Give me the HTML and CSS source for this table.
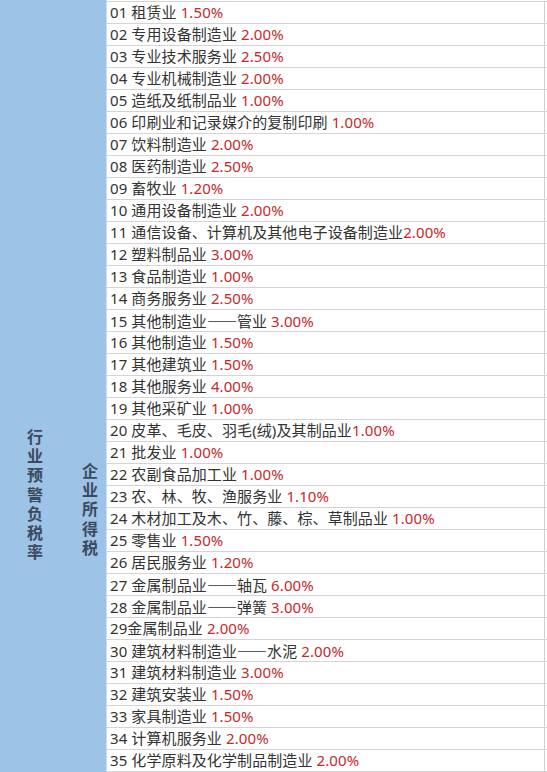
FILE: index.html
```html
<!DOCTYPE html>
<html lang="zh-CN">
<head>
<meta charset="utf-8">
<title>行业预警负税率</title>
<link rel="stylesheet" href="styles.css">
</head>
<body>
<div class="sheet">
  <div class="side">
    <div class="col col-a"><div class="vtext va">行业预警负税率</div></div>
    <div class="col col-b"><div class="vtext vb">企业所得税</div></div>
  </div>
  <div class="rows">
    <div class="row"><div class="cell">01 租赁业 <span class="pct">1.50%</span></div></div>
    <div class="row"><div class="cell">02 专用设备制造业 <span class="pct">2.00%</span></div></div>
    <div class="row"><div class="cell">03 专业技术服务业 <span class="pct">2.50%</span></div></div>
    <div class="row"><div class="cell">04 专业机械制造业 <span class="pct">2.00%</span></div></div>
    <div class="row"><div class="cell">05 造纸及纸制品业 <span class="pct">1.00%</span></div></div>
    <div class="row"><div class="cell">06 印刷业和记录媒介的复制印刷 <span class="pct">1.00%</span></div></div>
    <div class="row"><div class="cell">07 饮料制造业 <span class="pct">2.00%</span></div></div>
    <div class="row"><div class="cell">08 医药制造业 <span class="pct">2.50%</span></div></div>
    <div class="row"><div class="cell">09 畜牧业 <span class="pct">1.20%</span></div></div>
    <div class="row"><div class="cell">10 通用设备制造业 <span class="pct">2.00%</span></div></div>
    <div class="row"><div class="cell">11 通信设备、计算机及其他电子设备制造业<span class="pct">2.00%</span></div></div>
    <div class="row"><div class="cell">12 塑料制品业 <span class="pct">3.00%</span></div></div>
    <div class="row"><div class="cell">13 食品制造业 <span class="pct">1.00%</span></div></div>
    <div class="row"><div class="cell">14 商务服务业 <span class="pct">2.50%</span></div></div>
    <div class="row"><div class="cell">15 其他制造业<span class="dash">——</span>管业 <span class="pct">3.00%</span></div></div>
    <div class="row"><div class="cell">16 其他制造业 <span class="pct">1.50%</span></div></div>
    <div class="row"><div class="cell">17 其他建筑业 <span class="pct">1.50%</span></div></div>
    <div class="row"><div class="cell">18 其他服务业 <span class="pct">4.00%</span></div></div>
    <div class="row"><div class="cell">19 其他采矿业 <span class="pct">1.00%</span></div></div>
    <div class="row"><div class="cell">20 皮革、毛皮、羽毛(绒)及其制品业<span class="pct">1.00%</span></div></div>
    <div class="row"><div class="cell">21 批发业 <span class="pct">1.00%</span></div></div>
    <div class="row"><div class="cell">22 农副食品加工业 <span class="pct">1.00%</span></div></div>
    <div class="row"><div class="cell">23 农、林、牧、渔服务业 <span class="pct">1.10%</span></div></div>
    <div class="row"><div class="cell">24 木材加工及木、竹、藤、棕、草制品业 <span class="pct">1.00%</span></div></div>
    <div class="row"><div class="cell">25 零售业 <span class="pct">1.50%</span></div></div>
    <div class="row"><div class="cell">26 居民服务业 <span class="pct">1.20%</span></div></div>
    <div class="row"><div class="cell">27 金属制品业<span class="dash">——</span>轴瓦 <span class="pct">6.00%</span></div></div>
    <div class="row"><div class="cell">28 金属制品业<span class="dash">——</span>弹簧 <span class="pct">3.00%</span></div></div>
    <div class="row"><div class="cell">29金属制品业 <span class="pct">2.00%</span></div></div>
    <div class="row"><div class="cell">30 建筑材料制造业<span class="dash">——</span>水泥 <span class="pct">2.00%</span></div></div>
    <div class="row"><div class="cell">31 建筑材料制造业 <span class="pct">3.00%</span></div></div>
    <div class="row"><div class="cell">32 建筑安装业 <span class="pct">1.50%</span></div></div>
    <div class="row"><div class="cell">33 家具制造业 <span class="pct">1.50%</span></div></div>
    <div class="row"><div class="cell">34 计算机服务业 <span class="pct">2.00%</span></div></div>
    <div class="row"><div class="cell">35 化学原料及化学制品制造业 <span class="pct">2.00%</span></div></div>
  </div>
</div>
</body>
</html>
```

FILE: styles.css
```css
html, body {
  margin: 0;
  padding: 0;
  background: #ffffff;
}
body {
  font-family: "Noto Sans", "Noto Sans CJK SC", sans-serif;
  width: 547px;
  height: 772px;
  overflow: hidden;
}
.sheet {
  display: flex;
  height: 772px;
}
.side {
  width: 106px;
  flex: none;
  background: #9dc3e6;
  border-right: 1px solid #c9dcec;
  display: flex;
}
.col {
  display: flex;
  justify-content: center;
}
.col-a {
  width: 70px;
}
.col-b {
  width: 36px;
}
.vtext {
  width: 16px;
  font-family: "Noto Sans CJK SC", sans-serif;
  font-size: 16px;
  font-weight: 700;
  line-height: 19.2px;
  color: #3c4a60;
  word-break: break-all;
}
.va {
  padding-top: 427px;
}
.vb {
  padding-top: 461px;
  margin-left: 4px;
}
.rows {
  flex: 1;
  margin-top: 1px;
  border-top: 1px solid #d4d4d4;
}
.row {
  display: flex;
  height: 21px;
  border-bottom: 1px solid #d4d4d4;
}
.cell {
  width: 434px;
  flex: none;
  padding-left: 3px;
  border-right: 1px solid #cfcfcf;
  font-size: 15px;
  line-height: 21px;
  letter-spacing: 0.1px;
  color: #333333;
  white-space: nowrap;
  overflow: hidden;
}
.dash {
  font-family: "Noto Sans CJK SC", sans-serif;
  letter-spacing: 0;
}
.pct {
  color: #c8282a;
}
```
